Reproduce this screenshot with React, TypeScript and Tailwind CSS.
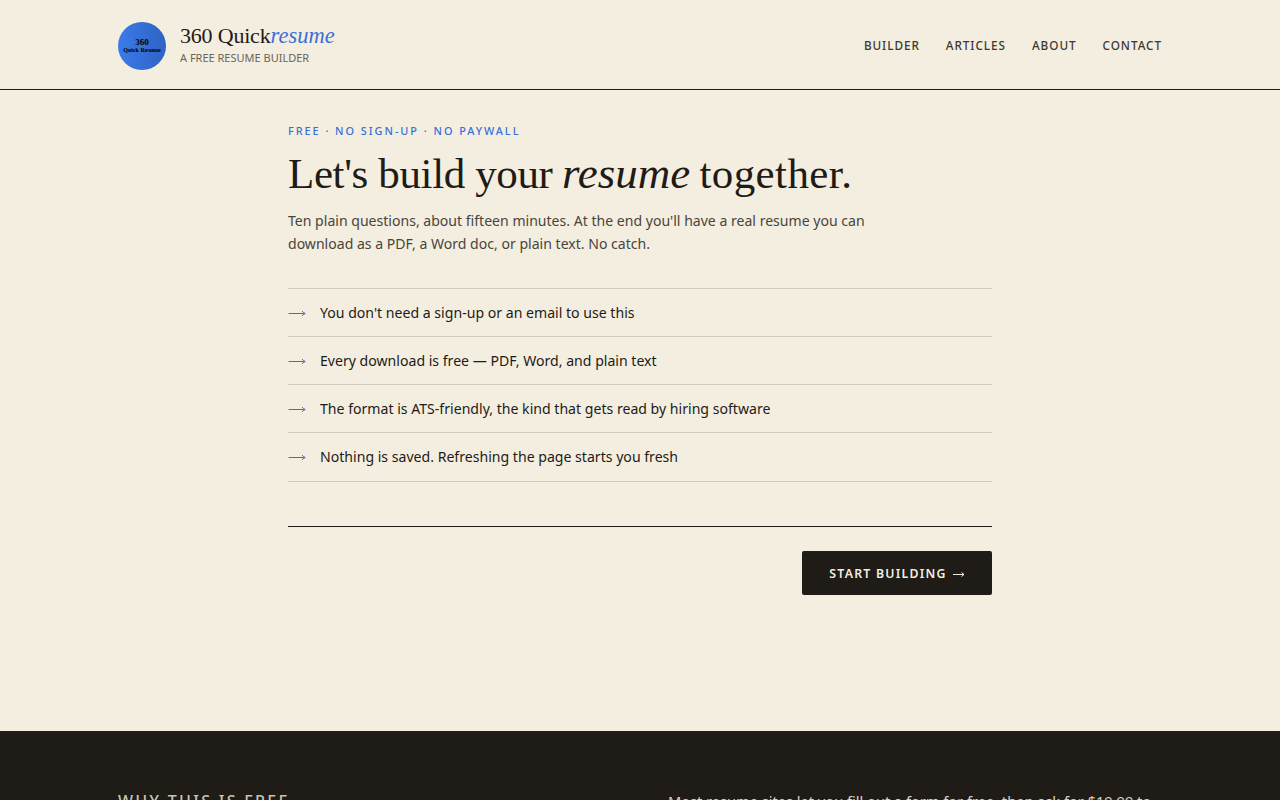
const sans = "font-['Noto_Sans',sans-serif]";
const serif = "font-['Liberation_Serif',serif]";

const items = [
  "You don't need a sign-up or an email to use this",
  "Every download is free — PDF, Word, and plain text",
  "The format is ATS-friendly, the kind that gets read by hiring software",
  "Nothing is saved. Refreshing the page starts you fresh",
];

function Arrow() {
  return (
    <svg width="18" height="8" viewBox="0 0 18 8" fill="none" className="mr-[14px] shrink-0" stroke="#3b6fd8" strokeWidth="1">
      <path d="M0.5 4.5H17" />
      <path d="M14 2C14.8 3.2 15.8 4 17.2 4.5C15.8 5 14.8 5.8 14 7" />
    </svg>
  );
}

export default function App() {
  return (
    <div className={`min-h-screen bg-[#f3eee0] text-[#1f1b16] ${sans}`}>
      <header className="h-[90px] border-b border-[#1f1b16]">
        <div className="mx-auto flex h-full w-[1044px] items-center justify-between pt-[2px]">
          <div className="flex items-center gap-[14px]">
            <div className="flex h-12 w-12 flex-col items-center justify-center rounded-full bg-gradient-to-r from-[#3b7bea] to-[#2f62c4] text-black">
              <span className={`${serif} text-[9px] font-bold leading-[9px]`}>360</span>
              <span className={`${serif} text-[6px] font-bold leading-[7px]`}>Quick Resume</span>
            </div>
            <div className="-mt-[4px]">
              <div className={`${serif} text-[22px] leading-[28px] tracking-[-0.2px]`}>
                360 Quick<em className="text-[22.5px] tracking-normal text-[#3b6fd8]">resume</em>
              </div>
              <div className="text-[11px] leading-[15px] text-[#6b6457]">A FREE RESUME BUILDER</div>
            </div>
          </div>
          <nav className="flex gap-[26px] text-[11.75px] font-medium tracking-[0.08em] text-[#3d382f]">
            <a>BUILDER</a>
            <a>ARTICLES</a>
            <a>ABOUT</a>
            <a>CONTACT</a>
          </nav>
        </div>
      </header>

      <main className="mx-auto h-[641px] w-[704px] pt-[34px]">
        <p className="text-[10.9px] font-medium leading-[14px] tracking-[0.18em] text-[#3b6fd8]">FREE · NO SIGN-UP · NO PAYWALL</p>
        <h1 className={`${serif} mt-[10px] text-[43px] font-normal leading-[50px]`}>
          <span className="tracking-[-0.37px]">Let's build your </span>
          <em className="-ml-[1px] -mr-[2px] text-[45px]">resume</em>
          <span className="tracking-[0.4px]"> together.</span>
        </h1>
        <p className="mt-[10px] w-[600px] text-[14.07px] leading-[23px] text-[#4a453b]">
          Ten plain questions, about fifteen minutes. At the end you'll have a real resume you can download as a PDF, a Word doc, or plain text. No catch.
        </p>
        <ul className="mt-[33px] border-t border-[#cfc9ba]">
          {items.map((t) => (
            <li key={t} className="flex h-[48.15px] items-center border-b border-[#cfc9ba] text-[14.1px]">
              <Arrow />
              <span>{t}</span>
            </li>
          ))}
        </ul>
        <div className="mt-11 flex justify-end border-t border-[#1f1b16] pt-6">
          <button className="flex h-11 w-[190px] items-center justify-center gap-[6px] rounded-[2px] bg-[#1f1b16] pt-[3px] text-[12.3px] font-semibold tracking-[0.1em] text-[#f3eee0]">
            START BUILDING
            <svg width="12" height="6" viewBox="0 0 12 6" fill="none" stroke="#f3eee0" strokeWidth="1">
              <path d="M0 3.5H11" />
              <path d="M8.5 1.5L11 3.5L8.5 5.5" />
            </svg>
          </button>
        </div>
      </main>

      <footer className="bg-[#1f1b16] pb-16 pt-[58px]">
        <div className="mx-auto flex w-[1044px] justify-between">
          <h2 className="text-base font-medium tracking-[0.143em] text-[#c9c3b2]">WHY THIS IS FREE</h2>
          <p className="w-[494px] text-[14.6px] leading-6 text-[#d9d3c4]">
            Most resume sites let you fill out a form for free, then ask for $19.99 to download the result.
          </p>
        </div>
      </footer>
    </div>
  );
}
